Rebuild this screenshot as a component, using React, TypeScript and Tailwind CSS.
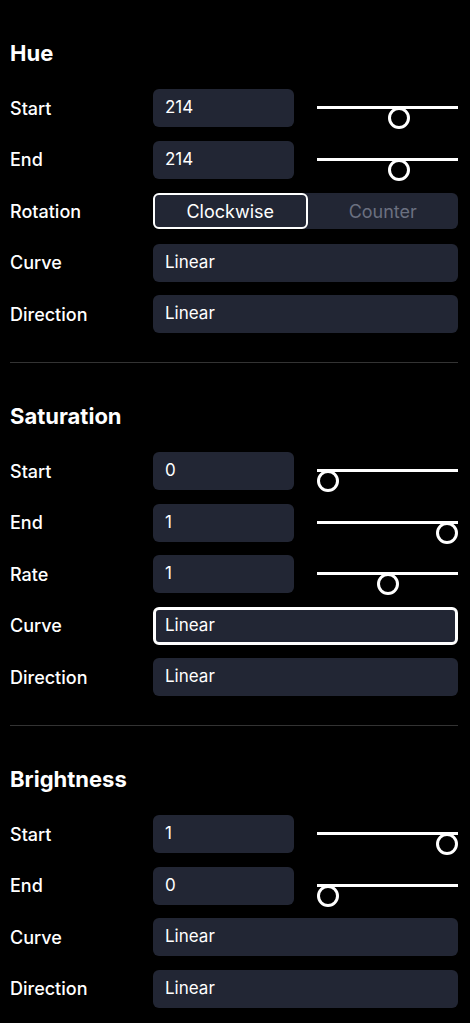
import React from 'react';

type Row =
  | { kind: 'slider'; label: string; value: number; min: number; max: number }
  | { kind: 'segment'; label: string; options: string[]; active: number }
  | { kind: 'text'; label: string; value: string; focused?: boolean };

interface Section {
  title: string;
  rows: Row[];
}

const sections: Section[] = [
  {
    title: 'Hue',
    rows: [
      { kind: 'slider', label: 'Start', value: 214, min: 0, max: 360 },
      { kind: 'slider', label: 'End', value: 214, min: 0, max: 360 },
      { kind: 'segment', label: 'Rotation', options: ['Clockwise', 'Counter'], active: 0 },
      { kind: 'text', label: 'Curve', value: 'Linear' },
      { kind: 'text', label: 'Direction', value: 'Linear' },
    ],
  },
  {
    title: 'Saturation',
    rows: [
      { kind: 'slider', label: 'Start', value: 0, min: 0, max: 1 },
      { kind: 'slider', label: 'End', value: 1, min: 0, max: 1 },
      { kind: 'slider', label: 'Rate', value: 1, min: 0, max: 2 },
      { kind: 'text', label: 'Curve', value: 'Linear', focused: true },
      { kind: 'text', label: 'Direction', value: 'Linear' },
    ],
  },
  {
    title: 'Brightness',
    rows: [
      { kind: 'slider', label: 'Start', value: 1, min: 0, max: 1 },
      { kind: 'slider', label: 'End', value: 0, min: 0, max: 1 },
      { kind: 'text', label: 'Curve', value: 'Linear' },
      { kind: 'text', label: 'Direction', value: 'Linear' },
    ],
  },
];

const Slider: React.FC<{ value: number; min: number; max: number }> = ({ value, min, max }) => {
  const pct = (value - min) / (max - min);
  return (
    <div className="relative h-full w-[141px]">
      <div className="absolute left-0 right-0 top-[17px] h-[3px] bg-white" />
      {/* thumb stays inside the track */}
      <div
        className="absolute top-[18px] h-[22px] w-[22px] rounded-full border-[3px] border-white bg-black"
        style={{ left: `${pct * (141 - 22)}px` }}
      />
    </div>
  );
};

const Field: React.FC<{ row: Row }> = ({ row }) => {
  if (row.kind === 'slider') {
    return (
      <div className="flex h-full gap-[23px]">
        <div className="flex h-full w-[141px] items-center rounded-md bg-[#222634] px-3 text-[17px] text-white">
          {row.value}
        </div>
        <Slider value={row.value} min={row.min} max={row.max} />
      </div>
    );
  }
  if (row.kind === 'segment') {
    return (
      <div className="flex h-[36px] w-[305px] rounded-md bg-[#222634]">
        {row.options.map((opt, i) => (
          <div
            key={opt}
            className={`flex flex-1 items-center justify-center rounded-md text-[18px] ${
              i === row.active ? 'border-2 border-white text-white' : 'text-[#6b7080]'
            }`}
          >
            {opt}
          </div>
        ))}
      </div>
    );
  }
  return (
    <div
      className={`flex h-full w-[305px] items-center rounded-md bg-[#222634] text-[17px] text-white ${
        row.focused ? 'border-[3px] border-white px-[9px]' : 'px-3'
      }`}
    >
      {row.value}
    </div>
  );
};

export default function App() {
  return (
    <div
      className="min-h-[1023px] w-[470px] bg-black text-white"
      style={{ fontFamily: 'Inter, "Noto Sans", sans-serif' }}
    >
      {sections.map((section, si) => (
        <div key={section.title} className="px-[10px]">
          {si > 0 && <div className="mr-[2px] h-px bg-[#333333]" />}
          <div className="pb-[29px] pt-[39px]">
            <h2 className="h-[28px] text-[22px] font-bold leading-[28px]">{section.title}</h2>
            <div className="mt-[22px] flex flex-col gap-[13.5px]">
              {section.rows.map((row, ri) => (
                <div key={ri} className="flex h-[38px] items-center">
                  <div className="w-[143px] text-[18px] font-medium">{row.label}</div>
                  <Field row={row} />
                </div>
              ))}
            </div>
          </div>
        </div>
      ))}
    </div>
  );
}
